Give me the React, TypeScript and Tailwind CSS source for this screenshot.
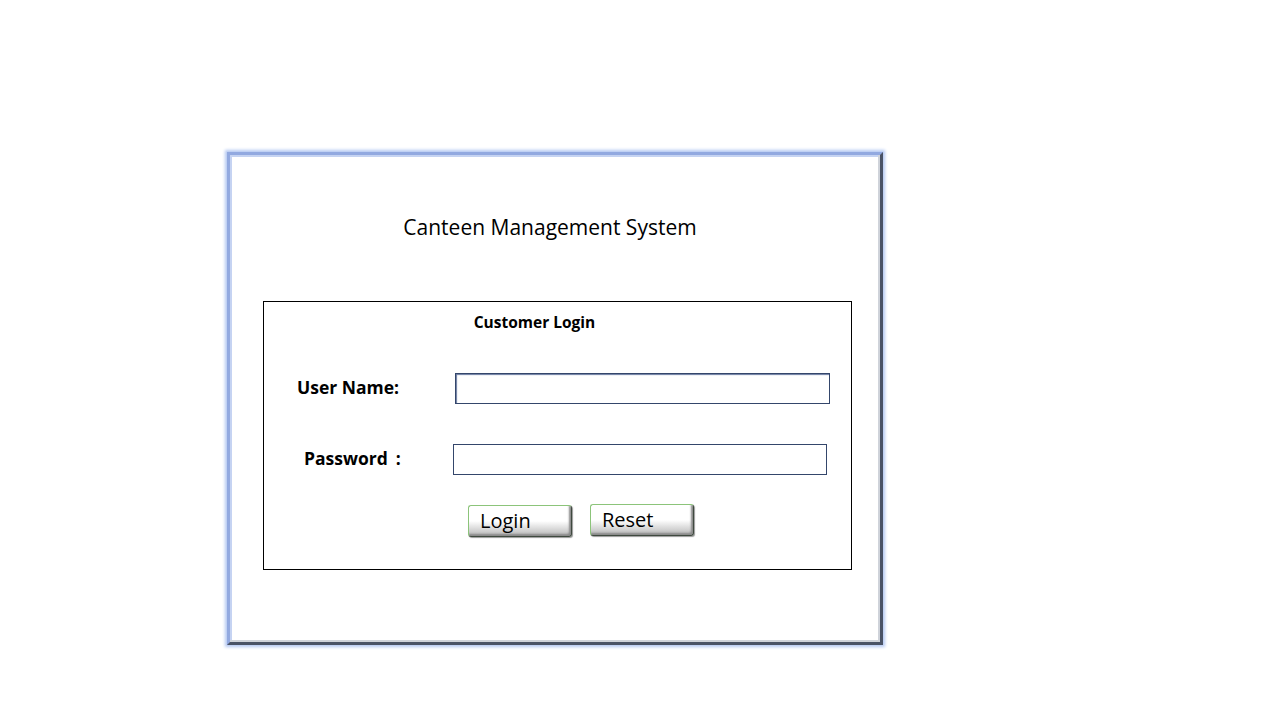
import React from "react";

const font = { fontFamily: '"Open Sans", "Liberation Sans", sans-serif' };

function BevelButton({ label, className }: { label: string; className?: string }) {
    return (
        <button
            type="button"
            className={
                "h-[32px] w-[104px] rounded-[3px] border border-t-[#8cc47a] border-l-[#8cc47a] border-r-[#3f4a3f] border-b-[#3f4a3f] bg-gradient-to-b from-white via-white to-[#b8b8b8] pl-[11px] text-left text-[20px] leading-[30px] text-black shadow-[inset_-2px_-2px_2px_#8a8a8a,1px_1px_1px_#9a9a9a] " +
                (className ?? "")
            }
        >
            {label}
        </button>
    );
}

export default function App() {
    return (
        <div className="h-[720px] w-[1280px] bg-white pl-[227px] pt-[152px]" style={font}>
            <div className="h-[493px] w-[656px] border-[3px] border-t-[#92a9e0] border-l-[#92a9e0] border-r-[#4a5366] border-b-[#4a5366] bg-white shadow-[0_0_3px_2px_#b4c8f2,inset_-2px_-2px_0_#cfd3da,inset_2px_2px_0_#c5d3f2]">
                <div className="flex flex-col">
                    <div className="mt-[58px] pr-[10px] text-center text-[21px] leading-[28px] text-black">
                        Canteen Management System
                    </div>
                    <div className="ml-[33px] mt-[60px] h-[269px] w-[589px] border border-black">
                        <div className="pr-[46px] pt-[9px] text-center text-[15.5px] font-bold leading-[22px] text-black">
                            Customer Login
                        </div>
                        <div className="mt-[40px] flex items-center">
                            <div className="-mt-[3px] w-[191px] pl-[33px] text-[17.5px] font-bold text-black">User Name:</div>
                            <div className="h-[31px] w-[375px] border border-[#34466b] shadow-[inset_1px_1px_1px_#6a7aa0]" />
                        </div>
                        <div className="mt-[40px] flex items-center">
                            <div className="-mt-[2px] w-[189px] pl-[40px] text-[17.5px] font-bold text-black">
                                Password<span className="ml-[8px]">:</span>
                            </div>
                            <div className="h-[31px] w-[374px] border border-[#34466b]" />
                        </div>
                        <div className="mt-[29px] flex items-start pl-[204px]">
                            <BevelButton label="Login" className="mt-[1px]" />
                            <BevelButton label="Reset" className="ml-[18px]" />
                        </div>
                    </div>
                </div>
            </div>
        </div>
    );
}
